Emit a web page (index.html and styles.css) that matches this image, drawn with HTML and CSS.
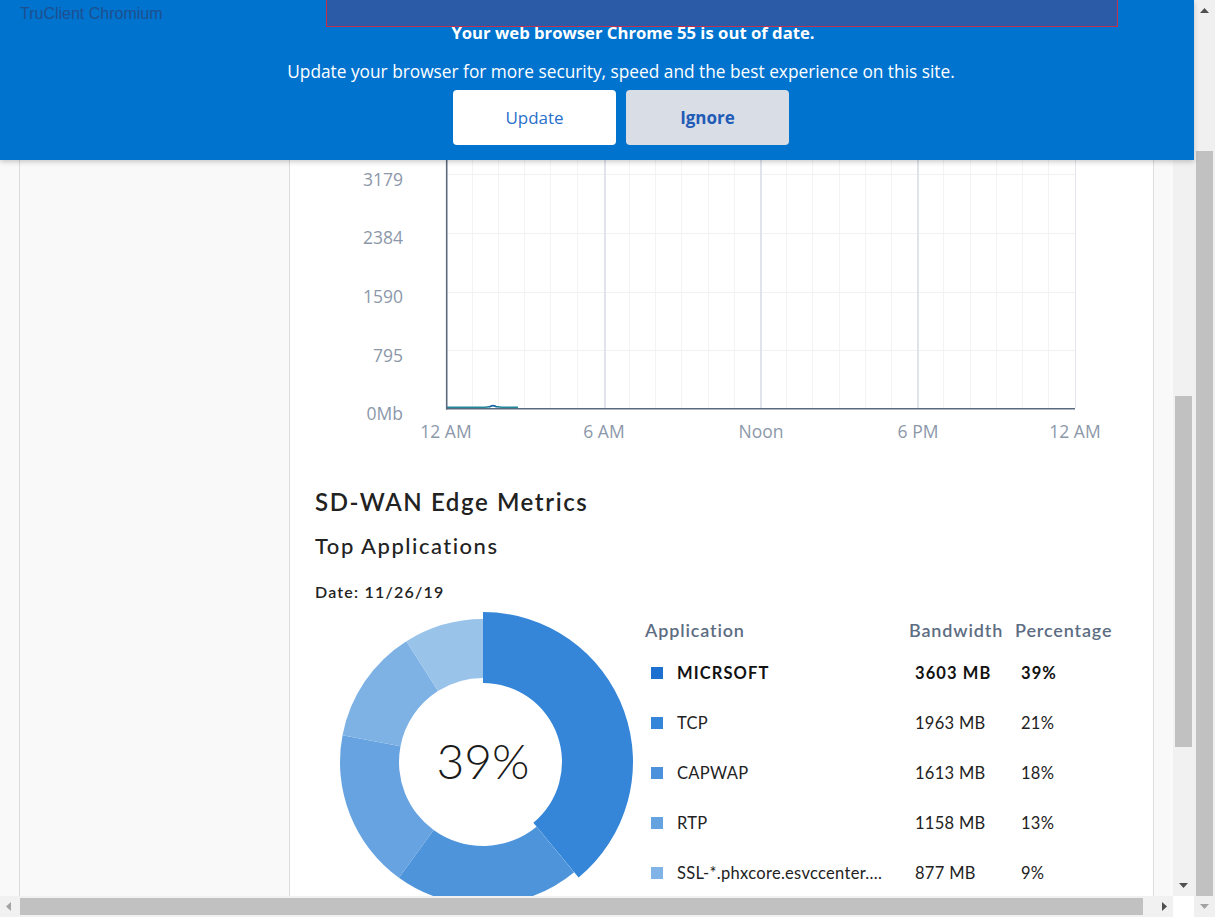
FILE: index.html
```html
<!DOCTYPE html>
<html>
<head>
<meta charset="utf-8">
<title>SD-WAN Edge Metrics</title>
<link rel="stylesheet" href="styles.css">
</head>
<body>
<div class="window">
  <div class="viewport">
    <div class="scroller">
      <div class="content">
        <div class="frame">
          <aside class="sidebar"></aside>
          <main class="main">
            <svg class="chart" width="863" height="350" viewBox="0 0 863 350">
              <g class="grid-h">
                <line x1="156" y1="15.5" x2="785" y2="15.5"/>
                <line x1="156" y1="74.5" x2="785" y2="74.5"/>
                <line x1="156" y1="133.5" x2="785" y2="133.5"/>
                <line x1="156" y1="192.5" x2="785" y2="192.5"/>
                <line x1="156" y1="250.5" x2="785" y2="250.5"/>
              </g>
              <g class="grid-v">
                <line x1="182.5" y1="0" x2="182.5" y2="308"/>
                <line x1="208.5" y1="0" x2="208.5" y2="308"/>
                <line x1="234.5" y1="0" x2="234.5" y2="308"/>
                <line x1="260.5" y1="0" x2="260.5" y2="308"/>
                <line x1="287.5" y1="0" x2="287.5" y2="308"/>
                <line x1="339.5" y1="0" x2="339.5" y2="308"/>
                <line x1="365.5" y1="0" x2="365.5" y2="308"/>
                <line x1="391.5" y1="0" x2="391.5" y2="308"/>
                <line x1="418.5" y1="0" x2="418.5" y2="308"/>
                <line x1="444.5" y1="0" x2="444.5" y2="308"/>
                <line x1="496.5" y1="0" x2="496.5" y2="308"/>
                <line x1="522.5" y1="0" x2="522.5" y2="308"/>
                <line x1="549.5" y1="0" x2="549.5" y2="308"/>
                <line x1="575.5" y1="0" x2="575.5" y2="308"/>
                <line x1="601.5" y1="0" x2="601.5" y2="308"/>
                <line x1="653.5" y1="0" x2="653.5" y2="308"/>
                <line x1="680.5" y1="0" x2="680.5" y2="308"/>
                <line x1="706.5" y1="0" x2="706.5" y2="308"/>
                <line x1="732.5" y1="0" x2="732.5" y2="308"/>
                <line x1="758.5" y1="0" x2="758.5" y2="308"/>
              </g>
              <g class="grid-major">
                <line x1="315" y1="0" x2="315" y2="308"/>
                <line x1="471" y1="0" x2="471" y2="308"/>
                <line x1="628" y1="0" x2="628" y2="308"/>
              </g>
              <line class="edge" x1="785.5" y1="0" x2="785.5" y2="308"/>
              <path class="series" d="M157,307.3 L195,307.3 L200,306.6 L203,305.6 L206,306.6 L212,307.2 L228,307.3"/>
              <path class="series2" d="M199,306.8 L203,305.4 L207,306.8"/>
              <line class="axis" x1="156.7" y1="0" x2="156.7" y2="309.5"/>
              <line class="axis" x1="156" y1="308.8" x2="785" y2="308.8"/>
              <g class="ylabels">
                <text x="113" y="86">3179</text>
                <text x="113" y="144">2384</text>
                <text x="113" y="203">1590</text>
                <text x="113" y="262">795</text>
                <text x="113" y="320">0Mb</text>
              </g>
              <g class="xlabels">
                <text x="156" y="338">12 AM</text>
                <text x="314" y="338">6 AM</text>
                <text x="471" y="338">Noon</text>
                <text x="628" y="338">6 PM</text>
                <text x="785" y="338">12 AM</text>
              </g>
            </svg>
            <section class="metrics">
              <h1 class="title">SD-WAN Edge Metrics</h1>
              <h2 class="subtitle">Top Applications</h2>
              <div class="date">Date: 11/26/19</div>
              <div class="apps">
                <svg class="donut" width="310" height="310" viewBox="0 0 310 310">
                  <path fill="#3586d8" d="M155,5 A150,150 0 0 1 250.61,270.58 L205.35,215.87 A79,79 0 0 0 155,76 Z"/>
                  <path fill="#4e94db" d="M246.15,265.18 A143,143 0 0 1 70.94,270.69 L105.62,222.96 A84,84 0 0 0 208.54,219.72 Z"/>
                  <path fill="#66a3e0" d="M70.94,270.69 A143,143 0 0 1 14.53,128.2 L72.49,139.26 A84,84 0 0 0 105.62,222.96 Z"/>
                  <path fill="#7eb2e5" d="M14.53,128.2 A143,143 0 0 1 78.38,34.27 L109.99,84.08 A84,84 0 0 0 72.49,139.26 Z"/>
                  <path fill="#9ac3ea" d="M78.38,34.27 A143,143 0 0 1 155,12 L155,71 A84,84 0 0 0 109.99,84.08 Z"/>
                  <text class="donut-label" x="155" y="172">39%</text>
                </svg>
                <div class="legend">
                  <div class="lh">Application</div>
                  <div class="lh">Bandwidth</div>
                  <div class="lh">Percentage</div>

                  <div class="lc name strong"><span class="sw" style="background:#1b70d0"></span>MICRSOFT</div>
                  <div class="lc val strong">3603 MB</div>
                  <div class="lc val strong">39%</div>

                  <div class="lc name"><span class="sw" style="background:#3586d8"></span>TCP</div>
                  <div class="lc val">1963 MB</div>
                  <div class="lc val">21%</div>

                  <div class="lc name"><span class="sw" style="background:#4b91dc"></span>CAPWAP</div>
                  <div class="lc val">1613 MB</div>
                  <div class="lc val">18%</div>

                  <div class="lc name"><span class="sw" style="background:#65a3e0"></span>RTP</div>
                  <div class="lc val">1158 MB</div>
                  <div class="lc val">13%</div>

                  <div class="lc name"><span class="sw" style="background:#80b3e6"></span>SSL-*.phxcore.esvccenter....</div>
                  <div class="lc val">877 MB</div>
                  <div class="lc val">9%</div>
                </div>
              </div>
            </section>
          </main>
        </div>
      </div>
      <div class="vbar">
        <div class="sb-btn"><svg width="9" height="5" viewBox="0 0 9 5"><polygon points="0,5 9,5 4.5,0" fill="#505050"/></svg></div>
        <div class="vtrack"><div class="vthumb"></div></div>
        <div class="sb-btn"><svg width="9" height="5" viewBox="0 0 9 5"><polygon points="0,0 9,0 4.5,5" fill="#505050"/></svg></div>
      </div>
    </div>
    <div class="hrow">
      <div class="hbar">
        <div class="hb-btn"><svg width="5" height="9" viewBox="0 0 5 9"><polygon points="5,0 5,9 0,4.5" fill="#a3a3a3"/></svg></div>
        <div class="htrack"><div class="hthumb"></div></div>
        <div class="hb-btn"><svg width="5" height="9" viewBox="0 0 5 9"><polygon points="0,0 0,9 5,4.5" fill="#505050"/></svg></div>
      </div>
      <div class="corner"></div>
    </div>

    <div class="banner">
      <p class="banner-title">Your web browser Chrome 55 is out of date.</p>
      <p class="banner-text">Update your browser for more security, speed and the best experience on this site.</p>
      <div class="banner-actions">
        <button class="btn btn-update">Update</button>
        <button class="btn btn-ignore">Ignore</button>
      </div>
    </div>
    <div class="tc-label">TruClient Chromium</div>
    <div class="tc-box"></div>
  </div>
  <div class="outer-vbar">
    <div class="osb-btn"><svg width="9" height="5" viewBox="0 0 9 5"><polygon points="0,5 9,5 4.5,0" fill="#505050"/></svg></div>
    <div class="otrack"><div class="othumb"></div></div>
    <div class="osb-btn"><svg width="9" height="5" viewBox="0 0 9 5"><polygon points="0,0 9,0 4.5,5" fill="#a3a3a3"/></svg></div>
  </div>
</div>
</body>
</html>
```

FILE: styles.css
```css
* { box-sizing: border-box; margin: 0; padding: 0; }
html, body { width: 1215px; height: 917px; overflow: hidden; }
body { font-family: "Lato", "Open Sans", sans-serif; background: #fff; color: #222; }

.window { display: flex; width: 1215px; height: 917px; }
.viewport { position: relative; width: 1194px; height: 917px; display: flex; flex-direction: column; }
.scroller { display: flex; height: 896px; }
.content { width: 1173px; height: 896px; overflow: hidden; background: #f9f9f9; }

.frame {
  margin-left: 19px; width: 1135px; min-height: 100%;
  display: flex;
  border-left: 1px solid #dcdcdc; border-right: 1px solid #dcdcdc;
}
.sidebar { width: 270px; flex: none; background: #f9f9f9; border-right: 1px solid #dcdcdc; }
.main { width: 863px; flex: none; background: #fff; padding-top: 100px; }

/* chart */
.chart { display: block; }
.grid-h line { stroke: #f1f1f1; stroke-width: 1; }
.grid-v line { stroke: #f2f3f6; stroke-width: 1; }
.grid-major line { stroke: #e0e4ea; stroke-width: 2; }
.edge { stroke: #e3e6eb; stroke-width: 1; }
.axis { stroke: #5b6b7f; stroke-width: 1.6; }
.series { fill: none; stroke: #25879a; stroke-width: 1.6; }
.series2 { fill: none; stroke: #1f5fb0; stroke-width: 1.2; }
.ylabels text, .xlabels text { font-family: "Open Sans", sans-serif; font-size: 17.5px; fill: #8c98aa; }
.ylabels text { text-anchor: end; }
.xlabels text { text-anchor: middle; }

/* metrics */
.metrics { padding-left: 25px; }
.title { font-size: 24px; line-height: 28px; font-weight: 600; color: #222; margin-top: 38px; letter-spacing: 1.6px; }
.subtitle { font-size: 22px; line-height: 26px; font-weight: 500; color: #222; margin-top: 17px; letter-spacing: 1.5px; }
.date { font-size: 16px; line-height: 20px; font-weight: 600; color: #222; margin-top: 23px; letter-spacing: 1.2px; }

.apps { display: flex; align-items: flex-start; margin-top: 5px; }
.donut { display: block; flex: none; margin-left: 13px; }
.donut-label { font-family: "Lato", sans-serif; font-weight: 300; font-size: 48px; fill: #1a1a1a; text-anchor: middle; }

.legend {
  margin-left: 7px; margin-top: 13px;
  display: grid;
  grid-template-columns: 264px 106px 140px;
  grid-auto-rows: 50px;
  grid-template-rows: 28px;
}
.lh { font-size: 18px; line-height: 20px; font-weight: 600; color: #5d6d82; letter-spacing: 0.85px; white-space: nowrap; }
.lc { display: flex; align-items: center; font-size: 16.5px; color: #222; letter-spacing: 0.3px; white-space: nowrap; }
.name { padding-left: 6px; }
.val { padding-left: 6px; }
.strong { font-weight: 700; color: #111; letter-spacing: 1.1px; }
.sw { display: inline-block; width: 12px; height: 12px; margin-right: 14px; flex: none; }

/* scrollbars */
.vbar { width: 21px; height: 896px; background: #f1f1f1; display: flex; flex-direction: column; }
.sb-btn { height: 21px; flex: none; display: flex; align-items: center; justify-content: center; }
.vtrack { flex: 1; }
.vthumb { margin: 375px 2px 0 2px; height: 351px; background: #c1c1c1; }

.hrow { display: flex; height: 21px; }
.hbar { width: 1173px; background: #f1f1f1; display: flex; }
.hb-btn { width: 17px; flex: none; display: flex; align-items: center; justify-content: center; }
.htrack { flex: 1; padding: 2px 0 2px 3px; }
.hthumb { width: 1123px; height: 17px; background: #c1c1c1; }
.corner { width: 21px; background: #fff; }

.outer-vbar { width: 21px; height: 917px; background: #f0f0f0; display: flex; flex-direction: column; }
.osb-btn { height: 21px; flex: none; display: flex; align-items: center; justify-content: center; }
.otrack { flex: 1; }
.othumb { margin: 130px 2px 0 2px; height: 745px; background: #c1c1c1; }

/* banner overlay */
.banner {
  position: absolute; left: 0; top: 0; width: 1194px; height: 160px;
  background: #0073cf;
  box-shadow: 0 2px 5px rgba(0, 0, 0, 0.2);
  display: flex; flex-direction: column; align-items: center;
  padding: 22px 0 0 48px;
  font-family: "Open Sans", sans-serif; color: #fff;
}
.banner-title { font-size: 16.7px; line-height: 22px; font-weight: 700; margin-left: 24px; }
.banner-text { font-size: 17.3px; line-height: 22px; margin-top: 17px; }
.banner-actions { display: flex; gap: 10px; margin-top: 7px; }
.btn {
  width: 163px; height: 55px; border: none; border-radius: 4px;
  font-family: "Open Sans", sans-serif; font-size: 17px;
}
.btn-update { background: #fff; color: #2a6fcb; }
.btn-ignore { background: #d9dde5; color: #1f5bb7; font-weight: 700; }

.tc-label {
  position: absolute; left: 20px; top: 4px;
  font-family: "Liberation Sans", Arial, sans-serif; font-size: 16px; line-height: 20px;
  color: #1e4f8e;
}
.tc-box {
  position: absolute; left: 326px; top: 0; width: 792px; height: 27px;
  background: #2b5ba6; border: 1px solid #c0314f; border-top: none;
}
```
